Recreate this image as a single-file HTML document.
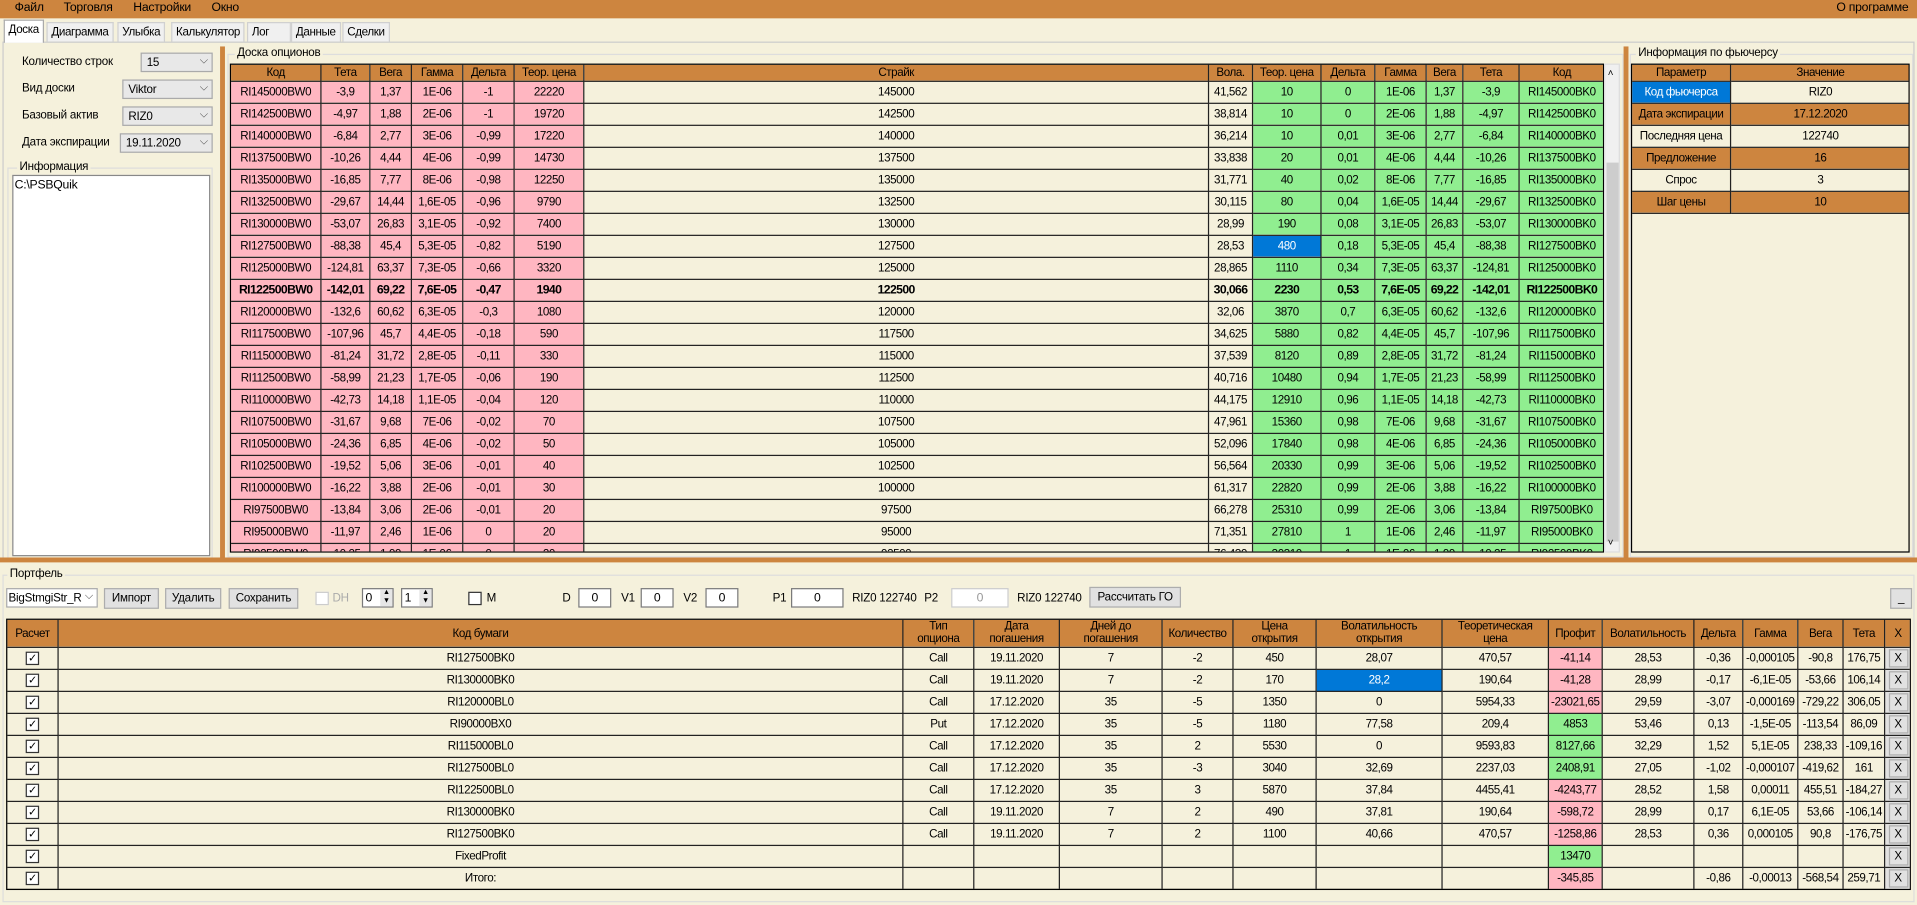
<!DOCTYPE html>
<html><head><meta charset="utf-8"><style>
*{box-sizing:border-box;margin:0;padding:0}
body{width:1917px;height:904px;overflow:hidden;background:#f5f1dc;font-family:"Liberation Sans",sans-serif;font-size:10px;color:#000;letter-spacing:-0.2px}
#w{position:absolute;left:0;top:0;width:1568px;height:740px;transform:scale(1.22258);transform-origin:0 0}
.a{position:absolute}
#menu{left:0;top:0;width:1568px;height:15px;background:#cd853f;font-size:10px}
#menu span{position:absolute;top:1px}
.tab{position:absolute;top:18px;height:16px;border:1px solid #d0d0d0;border-bottom:none;background:#f0f0f0;font-size:9.5px;padding:2px 3px 0;letter-spacing:-0.3px}
table{border-collapse:collapse;table-layout:fixed}
td{border:1px solid #222;height:18px;text-align:center;white-space:nowrap;overflow:hidden;font-size:9.5px;padding:0;letter-spacing:-0.35px}
.hd td{background:#cd853f;height:14px}
.p{background:#ffb6c1}.g{background:#90ee90}.c{background:#f5f1dc}.o{background:#cd853f}.b{background:#0078d7;color:#fff}
.bold td{font-weight:bold;font-size:10px;letter-spacing:-0.5px}
.cmb{position:absolute;height:16px;border:1px solid #aaa;background:#e8e8e8;font-size:9.5px;padding:2px 4px}
.cmb:after{content:"⌵";position:absolute;right:3px;top:0;font-size:9px;color:#444}
.btn{position:absolute;height:17px;border:1px solid #adadad;background:#e1e1e1;font-size:9.5px;text-align:center;padding-top:2px}
.box{position:absolute;height:16px;border:1px solid #7a7a7a;background:#fff;text-align:center;padding-top:2px}
.lbl{position:absolute;font-size:9.5px}
.ck{display:inline-block;width:11px;height:11px;border:1px solid #333;background:#fff;font-size:9px;line-height:9px;vertical-align:middle}
.bt td{height:18px}
.x{background:#e1e1e1}
.x span{display:inline-block;width:16px;height:15px;border:1px solid #adadad;line-height:13px}
</style></head><body><div id="w">
<div id="menu" class="a"><span style="left:12px">Файл</span><span style="left:52px">Торговля</span><span style="left:109px">Настройки</span><span style="left:173px">Окно</span><span style="left:1502px">О программе</span></div>
<div class="tab" style="left:38px">Диаграмма</div><div class="tab" style="left:96px">Улыбка</div><div class="tab" style="left:140px">Калькулятор</div><div class="tab" style="left:202px;width:36px">Лог</div><div class="tab" style="left:238px">Данные</div><div class="tab" style="left:280px">Сделки</div>
<div class="tab" style="left:3px;top:16px;height:19px;background:#fff;border-color:#aaa;z-index:2">Доска</div>
<div class="a" style="left:2px;top:34px;width:1564px;height:424px;border:1px solid #ccc"></div>
<div class="lbl" style="left:18px;top:45px">Количество строк</div><div class="cmb" style="left:115px;top:43px;width:59px">15</div>
<div class="lbl" style="left:18px;top:67px">Вид доски</div><div class="cmb" style="left:100px;top:65px;width:74px">Viktor</div>
<div class="lbl" style="left:18px;top:89px">Базовый актив</div><div class="cmb" style="left:100px;top:87px;width:74px">RIZ0</div>
<div class="lbl" style="left:18px;top:111px">Дата экспирации</div><div class="cmb" style="left:98px;top:109px;width:76px">19.11.2020</div>
<div class="a" style="left:6px;top:137px;width:168px;height:320px;border:1px solid #ddd"></div>
<div class="lbl" style="left:14px;top:131px;background:#f5f1dc;padding:0 2px">Информация</div>
<div class="a" style="left:10px;top:143px;width:162px;height:312px;background:#fff;border:1px solid #888;padding:2px 1px">C:\PSBQuik</div>
<div class="a" style="left:180px;top:38px;width:4px;height:418px;background:#cd853f"></div>
<div class="a" style="left:186px;top:44px;width:1142px;height:412px;border:1px solid #ddd"></div>
<div class="lbl" style="left:192px;top:38px;background:#f5f1dc;padding:0 2px">Доска опционов</div>
<div class="a" style="left:188px;top:52px;width:1124px;height:400px;overflow:hidden;border:1px solid #000">
<table style="width:1124px;margin:-1px 0 0 -1px"><colgroup><col style="width:74px"><col style="width:40px"><col style="width:34px"><col style="width:42px"><col style="width:42px"><col style="width:57px"><col style="width:511px"><col style="width:36px"><col style="width:56px"><col style="width:44px"><col style="width:42px"><col style="width:30px"><col style="width:46px"><col style="width:70px"></colgroup>
<tr class="hd"><td>Код</td><td>Тета</td><td>Вега</td><td>Гамма</td><td>Дельта</td><td>Теор. цена</td><td>Страйк</td><td>Вола.</td><td>Теор. цена</td><td>Дельта</td><td>Гамма</td><td>Вега</td><td>Тета</td><td>Код</td></tr>
<tr><td class="p">RI145000BW0</td><td class="p">-3,9</td><td class="p">1,37</td><td class="p">1E-06</td><td class="p">-1</td><td class="p">22220</td><td class="c">145000</td><td class="c">41,562</td><td class="g">10</td><td class="g">0</td><td class="g">1E-06</td><td class="g">1,37</td><td class="g">-3,9</td><td class="g">RI145000BK0</td></tr>
<tr><td class="p">RI142500BW0</td><td class="p">-4,97</td><td class="p">1,88</td><td class="p">2E-06</td><td class="p">-1</td><td class="p">19720</td><td class="c">142500</td><td class="c">38,814</td><td class="g">10</td><td class="g">0</td><td class="g">2E-06</td><td class="g">1,88</td><td class="g">-4,97</td><td class="g">RI142500BK0</td></tr>
<tr><td class="p">RI140000BW0</td><td class="p">-6,84</td><td class="p">2,77</td><td class="p">3E-06</td><td class="p">-0,99</td><td class="p">17220</td><td class="c">140000</td><td class="c">36,214</td><td class="g">10</td><td class="g">0,01</td><td class="g">3E-06</td><td class="g">2,77</td><td class="g">-6,84</td><td class="g">RI140000BK0</td></tr>
<tr><td class="p">RI137500BW0</td><td class="p">-10,26</td><td class="p">4,44</td><td class="p">4E-06</td><td class="p">-0,99</td><td class="p">14730</td><td class="c">137500</td><td class="c">33,838</td><td class="g">20</td><td class="g">0,01</td><td class="g">4E-06</td><td class="g">4,44</td><td class="g">-10,26</td><td class="g">RI137500BK0</td></tr>
<tr><td class="p">RI135000BW0</td><td class="p">-16,85</td><td class="p">7,77</td><td class="p">8E-06</td><td class="p">-0,98</td><td class="p">12250</td><td class="c">135000</td><td class="c">31,771</td><td class="g">40</td><td class="g">0,02</td><td class="g">8E-06</td><td class="g">7,77</td><td class="g">-16,85</td><td class="g">RI135000BK0</td></tr>
<tr><td class="p">RI132500BW0</td><td class="p">-29,67</td><td class="p">14,44</td><td class="p">1,6E-05</td><td class="p">-0,96</td><td class="p">9790</td><td class="c">132500</td><td class="c">30,115</td><td class="g">80</td><td class="g">0,04</td><td class="g">1,6E-05</td><td class="g">14,44</td><td class="g">-29,67</td><td class="g">RI132500BK0</td></tr>
<tr><td class="p">RI130000BW0</td><td class="p">-53,07</td><td class="p">26,83</td><td class="p">3,1E-05</td><td class="p">-0,92</td><td class="p">7400</td><td class="c">130000</td><td class="c">28,99</td><td class="g">190</td><td class="g">0,08</td><td class="g">3,1E-05</td><td class="g">26,83</td><td class="g">-53,07</td><td class="g">RI130000BK0</td></tr>
<tr><td class="p">RI127500BW0</td><td class="p">-88,38</td><td class="p">45,4</td><td class="p">5,3E-05</td><td class="p">-0,82</td><td class="p">5190</td><td class="c">127500</td><td class="c">28,53</td><td class="b">480</td><td class="g">0,18</td><td class="g">5,3E-05</td><td class="g">45,4</td><td class="g">-88,38</td><td class="g">RI127500BK0</td></tr>
<tr><td class="p">RI125000BW0</td><td class="p">-124,81</td><td class="p">63,37</td><td class="p">7,3E-05</td><td class="p">-0,66</td><td class="p">3320</td><td class="c">125000</td><td class="c">28,865</td><td class="g">1110</td><td class="g">0,34</td><td class="g">7,3E-05</td><td class="g">63,37</td><td class="g">-124,81</td><td class="g">RI125000BK0</td></tr>
<tr class="bold"><td class="p">RI122500BW0</td><td class="p">-142,01</td><td class="p">69,22</td><td class="p">7,6E-05</td><td class="p">-0,47</td><td class="p">1940</td><td class="c">122500</td><td class="c">30,066</td><td class="g">2230</td><td class="g">0,53</td><td class="g">7,6E-05</td><td class="g">69,22</td><td class="g">-142,01</td><td class="g">RI122500BK0</td></tr>
<tr><td class="p">RI120000BW0</td><td class="p">-132,6</td><td class="p">60,62</td><td class="p">6,3E-05</td><td class="p">-0,3</td><td class="p">1080</td><td class="c">120000</td><td class="c">32,06</td><td class="g">3870</td><td class="g">0,7</td><td class="g">6,3E-05</td><td class="g">60,62</td><td class="g">-132,6</td><td class="g">RI120000BK0</td></tr>
<tr><td class="p">RI117500BW0</td><td class="p">-107,96</td><td class="p">45,7</td><td class="p">4,4E-05</td><td class="p">-0,18</td><td class="p">590</td><td class="c">117500</td><td class="c">34,625</td><td class="g">5880</td><td class="g">0,82</td><td class="g">4,4E-05</td><td class="g">45,7</td><td class="g">-107,96</td><td class="g">RI117500BK0</td></tr>
<tr><td class="p">RI115000BW0</td><td class="p">-81,24</td><td class="p">31,72</td><td class="p">2,8E-05</td><td class="p">-0,11</td><td class="p">330</td><td class="c">115000</td><td class="c">37,539</td><td class="g">8120</td><td class="g">0,89</td><td class="g">2,8E-05</td><td class="g">31,72</td><td class="g">-81,24</td><td class="g">RI115000BK0</td></tr>
<tr><td class="p">RI112500BW0</td><td class="p">-58,99</td><td class="p">21,23</td><td class="p">1,7E-05</td><td class="p">-0,06</td><td class="p">190</td><td class="c">112500</td><td class="c">40,716</td><td class="g">10480</td><td class="g">0,94</td><td class="g">1,7E-05</td><td class="g">21,23</td><td class="g">-58,99</td><td class="g">RI112500BK0</td></tr>
<tr><td class="p">RI110000BW0</td><td class="p">-42,73</td><td class="p">14,18</td><td class="p">1,1E-05</td><td class="p">-0,04</td><td class="p">120</td><td class="c">110000</td><td class="c">44,175</td><td class="g">12910</td><td class="g">0,96</td><td class="g">1,1E-05</td><td class="g">14,18</td><td class="g">-42,73</td><td class="g">RI110000BK0</td></tr>
<tr><td class="p">RI107500BW0</td><td class="p">-31,67</td><td class="p">9,68</td><td class="p">7E-06</td><td class="p">-0,02</td><td class="p">70</td><td class="c">107500</td><td class="c">47,961</td><td class="g">15360</td><td class="g">0,98</td><td class="g">7E-06</td><td class="g">9,68</td><td class="g">-31,67</td><td class="g">RI107500BK0</td></tr>
<tr><td class="p">RI105000BW0</td><td class="p">-24,36</td><td class="p">6,85</td><td class="p">4E-06</td><td class="p">-0,02</td><td class="p">50</td><td class="c">105000</td><td class="c">52,096</td><td class="g">17840</td><td class="g">0,98</td><td class="g">4E-06</td><td class="g">6,85</td><td class="g">-24,36</td><td class="g">RI105000BK0</td></tr>
<tr><td class="p">RI102500BW0</td><td class="p">-19,52</td><td class="p">5,06</td><td class="p">3E-06</td><td class="p">-0,01</td><td class="p">40</td><td class="c">102500</td><td class="c">56,564</td><td class="g">20330</td><td class="g">0,99</td><td class="g">3E-06</td><td class="g">5,06</td><td class="g">-19,52</td><td class="g">RI102500BK0</td></tr>
<tr><td class="p">RI100000BW0</td><td class="p">-16,22</td><td class="p">3,88</td><td class="p">2E-06</td><td class="p">-0,01</td><td class="p">30</td><td class="c">100000</td><td class="c">61,317</td><td class="g">22820</td><td class="g">0,99</td><td class="g">2E-06</td><td class="g">3,88</td><td class="g">-16,22</td><td class="g">RI100000BK0</td></tr>
<tr><td class="p">RI97500BW0</td><td class="p">-13,84</td><td class="p">3,06</td><td class="p">2E-06</td><td class="p">-0,01</td><td class="p">20</td><td class="c">97500</td><td class="c">66,278</td><td class="g">25310</td><td class="g">0,99</td><td class="g">2E-06</td><td class="g">3,06</td><td class="g">-13,84</td><td class="g">RI97500BK0</td></tr>
<tr><td class="p">RI95000BW0</td><td class="p">-11,97</td><td class="p">2,46</td><td class="p">1E-06</td><td class="p">0</td><td class="p">20</td><td class="c">95000</td><td class="c">71,351</td><td class="g">27810</td><td class="g">1</td><td class="g">1E-06</td><td class="g">2,46</td><td class="g">-11,97</td><td class="g">RI95000BK0</td></tr>
<tr><td class="p">RI92500BW0</td><td class="p">-10,25</td><td class="p">1,99</td><td class="p">1E-06</td><td class="p">0</td><td class="p">20</td><td class="c">92500</td><td class="c">76,439</td><td class="g">30310</td><td class="g">1</td><td class="g">1E-06</td><td class="g">1,99</td><td class="g">-10,25</td><td class="g">RI92500BK0</td></tr>
</table></div>
<div class="a" style="left:1312px;top:52px;width:13px;height:400px;background:#f0f0f0;border:1px solid #ddd"><div class="a" style="left:2px;top:2px;font-size:8px">˄</div><div class="a" style="left:1px;top:80px;width:10px;height:310px;background:#cdcdcd"></div><div class="a" style="left:2px;top:386px;font-size:8px">˅</div></div>
<div class="a" style="left:1328px;top:38px;width:4px;height:418px;background:#cd853f"></div>
<div class="a" style="left:1333px;top:44px;width:232px;height:412px;border:1px solid #ddd"></div>
<div class="lbl" style="left:1338px;top:38px;background:#f5f1dc;padding:0 2px">Информация по фьючерсу</div>
<div class="a" style="left:1334px;top:52px;width:228px;height:400px;border:1px solid #000;background:#f5f1dc;overflow:hidden">
<table style="width:228px;margin:-1px 0 0 -1px"><colgroup><col style="width:81px"><col style="width:147px"></colgroup>
<tr class="hd"><td>Параметр</td><td>Значение</td></tr>
<tr><td class="b">Код фьючерса</td><td class="c">RIZ0</td></tr>
<tr><td class="o">Дата экспирации</td><td class="o">17.12.2020</td></tr>
<tr><td class="c">Последняя цена</td><td class="c">122740</td></tr>
<tr><td class="o">Предложение</td><td class="o">16</td></tr>
<tr><td class="c">Спрос</td><td class="c">3</td></tr>
<tr><td class="o">Шаг цены</td><td class="o">10</td></tr>
</table></div>
<div class="a" style="left:0;top:456px;width:1568px;height:4px;background:#cd853f"></div>
<div class="a" style="left:2px;top:470px;width:1564px;height:268px;border:1px solid #ddd"></div>
<div class="lbl" style="left:6px;top:464px;background:#f5f1dc;padding:0 2px">Портфель</div>
<div class="cmb" style="left:5px;top:481px;width:75px;background:#fff;padding-left:1px">BigStmgiStr_R</div>
<div class="btn" style="left:85px;top:481px;width:45px">Импорт</div>
<div class="btn" style="left:135px;top:481px;width:46px">Удалить</div>
<div class="btn" style="left:187px;top:481px;width:57px">Сохранить</div>
<div class="a" style="left:258px;top:484px;width:11px;height:11px;border:1px solid #ccc;background:#fff"></div><div class="lbl" style="left:272px;top:484px;color:#aaa">DH</div>
<div class="box" style="left:296px;top:481px;width:26px;text-align:left;padding-left:2px">0</div><div class="a" style="left:311px;top:482px;width:10px;height:14px;background:#e6e6e6;font-size:6px;line-height:7px;text-align:center">▲<br>▼</div>
<div class="box" style="left:328px;top:481px;width:26px;text-align:left;padding-left:2px">1</div><div class="a" style="left:343px;top:482px;width:10px;height:14px;background:#e6e6e6;font-size:6px;line-height:7px;text-align:center">▲<br>▼</div>
<div class="a" style="left:383px;top:484px;width:11px;height:11px;border:1px solid #333;background:#fff"></div><div class="lbl" style="left:398px;top:484px">M</div>
<div class="lbl" style="left:460px;top:484px">D</div><div class="box" style="left:473px;top:481px;width:27px">0</div>
<div class="lbl" style="left:508px;top:484px">V1</div><div class="box" style="left:524px;top:481px;width:27px">0</div>
<div class="lbl" style="left:559px;top:484px">V2</div><div class="box" style="left:577px;top:481px;width:27px">0</div>
<div class="lbl" style="left:632px;top:484px">P1</div><div class="box" style="left:647px;top:481px;width:43px">0</div>
<div class="lbl" style="left:697px;top:484px">RIZ0 122740</div>
<div class="lbl" style="left:756px;top:484px">P2</div><div class="box" style="left:778px;top:481px;width:47px;border-color:#ccc;color:#999">0</div>
<div class="lbl" style="left:832px;top:484px">RIZ0 122740</div>
<div class="btn" style="left:891px;top:480px;width:75px">Рассчитать ГО</div>
<div class="btn" style="left:1546px;top:481px;width:18px">_</div>
<div class="a" style="left:5px;top:506px;width:1558px;border:1px solid #000;overflow:hidden;background:#f5f1dc">
<table class="bt" style="width:1558px;margin:-1px 0 -1px -1px"><colgroup><col style="width:42px"><col style="width:691px"><col style="width:58px"><col style="width:70px"><col style="width:84px"><col style="width:58px"><col style="width:68px"><col style="width:103px"><col style="width:87px"><col style="width:44px"><col style="width:75px"><col style="width:40px"><col style="width:45px"><col style="width:37px"><col style="width:34px"><col style="width:22px"></colgroup>
<tr class="hd"><td style="height:23px">Расчет</td><td>Код бумаги</td><td style="line-height:10px">Тип<br>опциона</td><td style="line-height:10px">Дата<br>погашения</td><td style="line-height:10px">Дней до<br>погашения</td><td>Количество</td><td style="line-height:10px">Цена<br>открытия</td><td style="line-height:10px">Волатильность<br>открытия</td><td style="line-height:10px">Теоретическая<br>цена</td><td>Профит</td><td>Волатильность</td><td>Дельта</td><td>Гамма</td><td>Вега</td><td>Тета</td><td>X</td></tr>
<tr><td><span class="ck">✓</span></td><td>RI127500BK0</td><td>Call</td><td>19.11.2020</td><td>7</td><td>-2</td><td>450</td><td>28,07</td><td>470,57</td><td class="p">-41,14</td><td>28,53</td><td>-0,36</td><td>-0,000105</td><td>-90,8</td><td>176,75</td><td class="x"><span>X</span></td></tr>
<tr><td><span class="ck">✓</span></td><td>RI130000BK0</td><td>Call</td><td>19.11.2020</td><td>7</td><td>-2</td><td>170</td><td class="b">28,2</td><td>190,64</td><td class="p">-41,28</td><td>28,99</td><td>-0,17</td><td>-6,1E-05</td><td>-53,66</td><td>106,14</td><td class="x"><span>X</span></td></tr>
<tr><td><span class="ck">✓</span></td><td>RI120000BL0</td><td>Call</td><td>17.12.2020</td><td>35</td><td>-5</td><td>1350</td><td>0</td><td>5954,33</td><td class="p">-23021,65</td><td>29,59</td><td>-3,07</td><td>-0,000169</td><td>-729,22</td><td>306,05</td><td class="x"><span>X</span></td></tr>
<tr><td><span class="ck">✓</span></td><td>RI90000BX0</td><td>Put</td><td>17.12.2020</td><td>35</td><td>-5</td><td>1180</td><td>77,58</td><td>209,4</td><td class="g">4853</td><td>53,46</td><td>0,13</td><td>-1,5E-05</td><td>-113,54</td><td>86,09</td><td class="x"><span>X</span></td></tr>
<tr><td><span class="ck">✓</span></td><td>RI115000BL0</td><td>Call</td><td>17.12.2020</td><td>35</td><td>2</td><td>5530</td><td>0</td><td>9593,83</td><td class="g">8127,66</td><td>32,29</td><td>1,52</td><td>5,1E-05</td><td>238,33</td><td>-109,16</td><td class="x"><span>X</span></td></tr>
<tr><td><span class="ck">✓</span></td><td>RI127500BL0</td><td>Call</td><td>17.12.2020</td><td>35</td><td>-3</td><td>3040</td><td>32,69</td><td>2237,03</td><td class="g">2408,91</td><td>27,05</td><td>-1,02</td><td>-0,000107</td><td>-419,62</td><td>161</td><td class="x"><span>X</span></td></tr>
<tr><td><span class="ck">✓</span></td><td>RI122500BL0</td><td>Call</td><td>17.12.2020</td><td>35</td><td>3</td><td>5870</td><td>37,84</td><td>4455,41</td><td class="p">-4243,77</td><td>28,52</td><td>1,58</td><td>0,00011</td><td>455,51</td><td>-184,27</td><td class="x"><span>X</span></td></tr>
<tr><td><span class="ck">✓</span></td><td>RI130000BK0</td><td>Call</td><td>19.11.2020</td><td>7</td><td>2</td><td>490</td><td>37,81</td><td>190,64</td><td class="p">-598,72</td><td>28,99</td><td>0,17</td><td>6,1E-05</td><td>53,66</td><td>-106,14</td><td class="x"><span>X</span></td></tr>
<tr><td><span class="ck">✓</span></td><td>RI127500BK0</td><td>Call</td><td>19.11.2020</td><td>7</td><td>2</td><td>1100</td><td>40,66</td><td>470,57</td><td class="p">-1258,86</td><td>28,53</td><td>0,36</td><td>0,000105</td><td>90,8</td><td>-176,75</td><td class="x"><span>X</span></td></tr>
<tr><td><span class="ck">✓</span></td><td>FixedProfit</td><td></td><td></td><td></td><td></td><td></td><td></td><td></td><td class="g">13470</td><td></td><td></td><td></td><td></td><td></td><td class="x"><span>X</span></td></tr>
<tr><td><span class="ck">✓</span></td><td>Итого:</td><td></td><td></td><td></td><td></td><td></td><td></td><td></td><td class="p">-345,85</td><td></td><td>-0,86</td><td>-0,00013</td><td>-568,54</td><td>259,71</td><td class="x"><span>X</span></td></tr>
</table></div>
</div></body></html>
